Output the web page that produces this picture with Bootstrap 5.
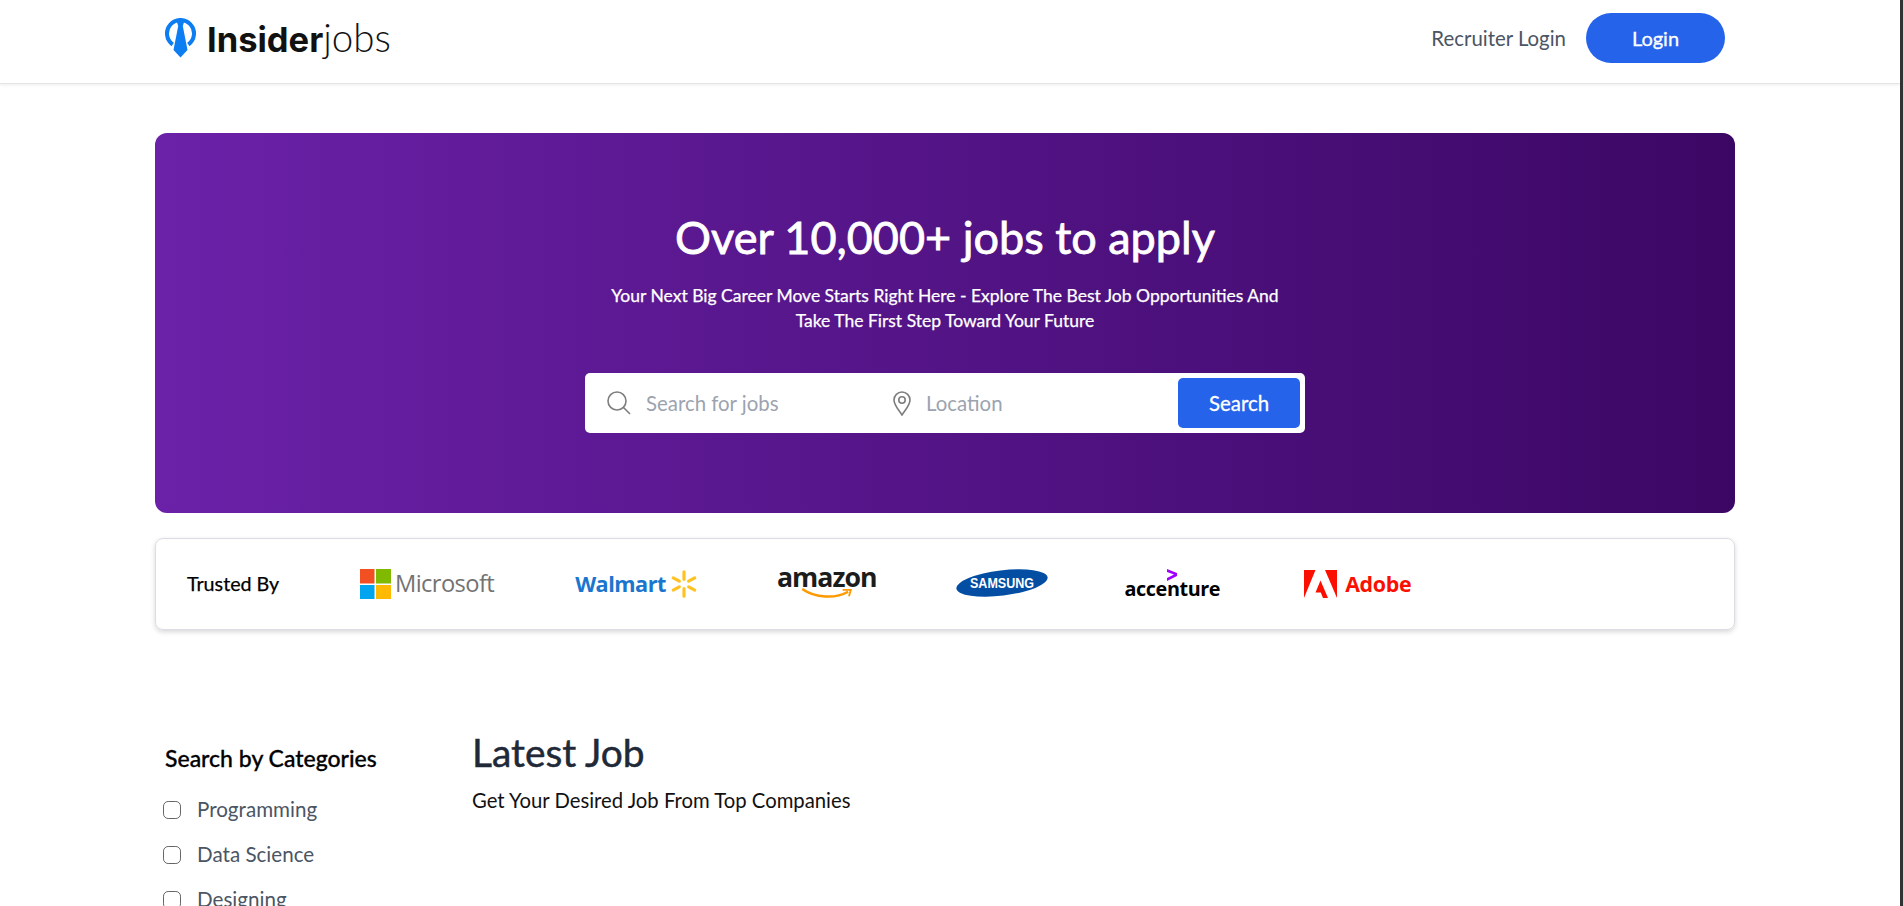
<!DOCTYPE html>
<html lang="en">
<head>
    <meta charset="UTF-8">
    <meta name="viewport" content="width=device-width, initial-scale=1.0">
    <title>Insiderjobs</title>
    <link href="https://cdn.jsdelivr.net/npm/bootstrap@5.3.0/dist/css/bootstrap.min.css" rel="stylesheet">
    <style>
        html, body { height: 906px; overflow: hidden; }
        body {
            font-family: "Lato", "Liberation Sans", sans-serif;
            color: #111827;
            border-right: 3px solid #333;
            background: #fff;
        }
        .top-bar { height: 84px; border-bottom: 1px solid #e5e5e5; box-shadow: 0 1px 3px rgba(0,0,0,.08); }
        .page-shell { margin-left: 155px; width: 1580px; }
        .top-inner { height: 76px; padding-left: 9px; padding-right: 10px; }
        .brand-name { font-size: 34.5px; line-height: 1; color: #111; font-family: "Inter", sans-serif; margin-left: 2px; }
        .brand-name b { font-weight: 700; }
        .brand-name span { font-family: "Lato", sans-serif; font-weight: 300; font-size: 38.5px; }
        .recruiter-link { color: #4b5563; font-size: 20.4px; margin-right: 20px; }
        .login-btn { width: 139px; height: 50px; background: #2563eb; color: #fff; font-size: 20px; border-radius: 25px; border: 0; -webkit-text-stroke: .3px #fff; }
        .hero-panel {
            height: 380px; margin-top: 49px; border-radius: 12px; color: #fff;
            background: linear-gradient(to right, #6b21a8, #3b0764);
            padding-top: 76px;
        }
        .hero-title { font-size: 45px; line-height: 56px; font-weight: 400; -webkit-text-stroke: .8px #fff; margin: 0 0 18px; }
        .hero-sub { font-size: 17.5px; line-height: 25px; -webkit-text-stroke: .25px #fff; margin: 0 0 40px; }
        .search-box { width: 720px; height: 60px; background: #fff; border-radius: 5px; padding: 5px; }
        .search-field { color: #9ca3af; font-size: 20.4px; }
        .search-what { width: 302px; }
        .search-pad { margin-right: 14px; }
        .search-go { width: 122px; height: 50px; background: #2563eb; color: #fff; border: 0; border-radius: 5px; font-size: 20.4px; -webkit-text-stroke: .3px #fff; }
        .trust-card { height: 92px; margin-top: 25px; border: 1px solid #dcdce4; border-radius: 8px; box-shadow: 0 2px 5px rgba(0,0,0,.16); padding-left: 31px; }
        .trust-label { font-size: 19.7px; color: #000; width: 94px; margin-right: 79px; -webkit-text-stroke: .25px #000; }
        .logo-slot { flex: none; }
        .ms-word { color: #737373; font-size: 23.7px; font-family: "Open Sans", sans-serif; letter-spacing: -.6px; line-height: 1; }
        .wm-word { color: #1a75cf; font-size: 21.7px; font-weight: 700; font-family: "Open Sans", sans-serif; letter-spacing: -.5px; line-height: 1; }
        .az-word { color: #1c1c1c; font-size: 26.7px; font-weight: 700; font-family: "Open Sans", sans-serif; letter-spacing: -1px; line-height: 23px; display: block; }
        .ac-word { color: #000; font-size: 19.8px; font-weight: 700; font-family: "Open Sans", sans-serif; letter-spacing: -.4px; line-height: 20px; display: block; }
        .ad-word { color: #fa0f00; font-size: 21.4px; font-weight: 700; font-family: "Open Sans", sans-serif; letter-spacing: -.3px; line-height: 1; }
        .gap-81 { margin-right: 81px; }
        .gap-79 { margin-right: 79px; }
        .gap-77 { margin-right: 77px; }
        .gap-84 { margin-right: 84px; }
        .lift-3 { padding-bottom: 5px; }
        .lift-2 { padding-bottom: 3px; }
        .accent-mark { margin: 0 auto -2px; }
        .filter-col { width: 317px; padding-left: 10px; padding-top: 115px; }
        .filter-title { font-size: 23px; color: #000; line-height: 26px; margin: 0 0 16px; -webkit-text-stroke: .3px #000; }
        .filter-row { height: 45px; color: #4b5563; font-size: 20.6px; margin-left: -2px; }
        .filter-row input { width: 18px; height: 18px; flex: none; margin: 0 16px 0 0; border: 1px solid #666; border-radius: 4px; }
        .jobs-col { padding-top: 100px; }
        .jobs-title { font-size: 38.9px; line-height: 44px; font-weight: 400; -webkit-text-stroke: .5px #1f2937; color: #1f2937; margin: 0 0 13px; }
        .jobs-sub { font-size: 20.3px; line-height: 26px; color: #111; margin: 0; }
    </style>
</head>
<body>
    <header class="top-bar">
        <div class="page-shell top-inner d-flex align-items-center justify-content-between">
            <a href="#" class="d-flex align-items-center gap-2 text-decoration-none">
                <svg width="33" height="40" viewBox="0 0 33 40">
                    <path d="M8.7 26.5A13.5 13.5 0 1 1 24.3 26.5" fill="none" stroke="#0d7df2" stroke-width="4"/>
                    <path d="M12 1H21L18.8 8L23.5 32L16.5 39.5L9.5 32L14.2 8Z" fill="#0d7df2"/>
                </svg>
                <span class="brand-name"><b>Insider</b><span>jobs</span></span>
            </a>
            <div class="d-flex align-items-center">
                <a href="#" class="recruiter-link text-decoration-none">Recruiter Login</a>
                <button class="login-btn" type="button">Login</button>
            </div>
        </div>
    </header>

    <main class="page-shell">
        <section class="hero-panel text-center">
            <h1 class="hero-title">Over 10,000+ jobs to apply</h1>
            <p class="hero-sub">Your Next Big Career Move Starts Right Here - Explore The Best Job Opportunities And<br>Take The First Step Toward Your Future</p>
            <div class="search-box mx-auto d-flex align-items-center">
                <div class="search-field search-what d-flex align-items-center text-start">
                    <svg class="ms-3 search-pad" width="26" height="26" viewBox="0 0 26 26" fill="none" stroke="#7d7d7d" stroke-width="1.6"><circle cx="11" cy="11" r="9"/><path d="M17.5 17.5L24 24"/></svg>
                    <span>Search for jobs</span>
                </div>
                <div class="search-field d-flex align-items-center text-start flex-grow-1">
                    <svg class="search-pad" width="20" height="26" viewBox="0 0 20 26" fill="none" stroke="#7d7d7d" stroke-width="1.6"><path d="M10 25C6 19 2 15 2 10A8 8 0 0 1 18 10C18 15 14 19 10 25Z"/><circle cx="10" cy="10" r="3.2"/></svg>
                    <span>Location</span>
                </div>
                <button class="search-go" type="button">Search</button>
            </div>
        </section>

        <section class="trust-card d-flex align-items-center">
            <div class="trust-label">Trusted By</div>
            <div class="logo-slot gap-81 d-flex align-items-center">
                <svg width="31" height="30" viewBox="0 0 31 30" class="me-1"><rect width="14.5" height="14.5" fill="#f25022"/><rect x="16" width="15" height="14.5" fill="#7fba00"/><rect y="16" width="14.5" height="14" fill="#00a4ef"/><rect x="16" y="16" width="15" height="14" fill="#ffb900"/></svg>
                <span class="ms-word">Microsoft</span>
            </div>
            <div class="logo-slot gap-79 d-flex align-items-center">
                <span class="wm-word">Walmart</span>
                <svg width="28" height="30" viewBox="0 0 30 30" class="ms-1" stroke="#ffc220" stroke-width="3.4" stroke-linecap="round"><path d="M15 2V10M15 20V28M3.5 8.5L10 12M26.5 8.5L20 12M3.5 21.5L10 18M26.5 21.5L20 18"/></svg>
            </div>
            <div class="logo-slot gap-79 lift-3 text-center">
                <span class="az-word">amazon</span>
                <svg class="d-block mx-auto" width="54" height="11" viewBox="0 0 58 12" fill="none" stroke="#f90" stroke-width="2.6"><path d="M2 1C16 11 38 12 52 4"/><path d="M46 2H55L53 9" stroke-width="2"/></svg>
            </div>
            <div class="logo-slot gap-77 lift-2">
                <svg width="92" height="32" viewBox="0 0 92 32">
                    <ellipse cx="46" cy="16" rx="46" ry="12.6" fill="#034ea2" transform="rotate(-7 46 16)"/>
                    <text x="46" y="21" text-anchor="middle" fill="#fff" font-family="Liberation Sans" font-size="14" font-weight="700" textLength="64" lengthAdjust="spacingAndGlyphs">SAMSUNG</text>
                </svg>
            </div>
            <div class="logo-slot gap-84 text-center">
                <svg class="d-block accent-mark" width="10" height="12" viewBox="0 0 10 12" fill="#a100ff"><path d="M0 0L10 4V7L0 12V9L7 5.5L0 3Z"/></svg>
                <span class="ac-word">accenture</span>
            </div>
            <div class="logo-slot d-flex align-items-center">
                <svg width="33" height="28" viewBox="0 0 33 28" class="me-2" fill="#fa0f00"><path d="M0 0H11.5L0 28Z"/><path d="M21 0H33V28Z"/><path d="M16.5 10.5L24 28H19L16.8 22.5H11.5Z"/></svg>
                <span class="ad-word">Adobe</span>
            </div>
        </section>

        <section class="d-flex">
            <aside class="filter-col flex-shrink-0">
                <h4 class="filter-title">Search by Categories</h4>
                <label class="filter-row d-flex align-items-center"><input type="checkbox" class="form-check-input">Programming</label>
                <label class="filter-row d-flex align-items-center"><input type="checkbox" class="form-check-input">Data Science</label>
                <label class="filter-row d-flex align-items-center"><input type="checkbox" class="form-check-input">Designing</label>
            </aside>
            <div class="jobs-col">
                <h3 class="jobs-title">Latest Job</h3>
                <p class="jobs-sub">Get Your Desired Job From Top Companies</p>
            </div>
        </section>
    </main>
    <script src="https://cdn.jsdelivr.net/npm/bootstrap@5.3.0/dist/js/bootstrap.bundle.min.js"></script>
</body>
</html>
